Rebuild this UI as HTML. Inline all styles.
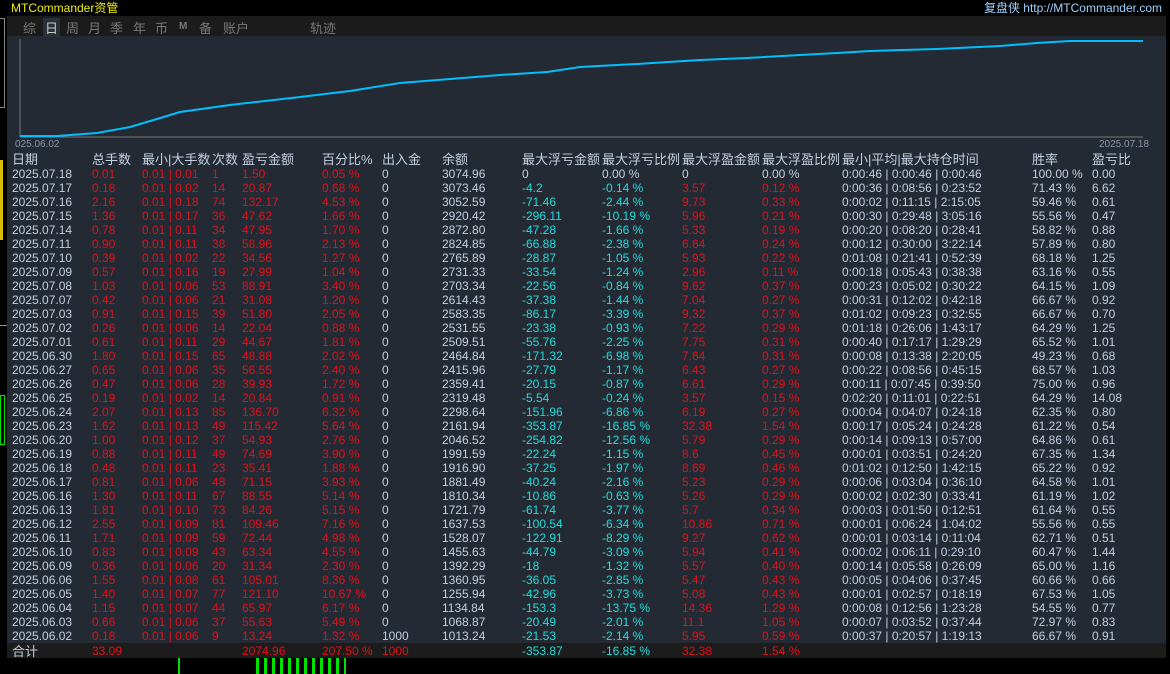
<!DOCTYPE html>
<html><head><meta charset="utf-8">
<style>
*{margin:0;padding:0;box-sizing:border-box}
body{width:1170px;height:674px;background:#000;overflow:hidden;position:relative;font-family:"Liberation Sans","Noto Sans CJK SC",sans-serif;font-size:12px;color:#c3cfe2}
.top{position:absolute;left:0;top:0;width:1170px;height:14px;}
.title{position:absolute;left:11px;top:-1px;color:#f0f000;font-size:12px}
.url{position:absolute;right:8px;top:-1px;color:#9fd0ff;font-size:12px}
.panel{position:absolute;left:7px;top:16px;width:1159px;height:642px;background:#232a33}
.tabs{position:absolute;left:0;top:0;width:1159px;height:20px;background:#1b1b1b;}
.tab{position:absolute;top:2px;font-size:13px;color:#777}
.chart{position:absolute;left:0;top:20px;}
.t{position:absolute;white-space:nowrap;line-height:13px}
.r{color:#e3101a}.c{color:#22dcdc}
.tot{position:absolute;left:0;top:627px;width:1159px;height:15px;background:#1c1c1c}
</style></head><body>
<div class="top"><div class="title">MTCommander资管</div><div class="url">复盘侠 http://MTCommander.com</div></div>
<div style="position:absolute;left:0;top:18px;width:5px;height:90px;border:1px solid #888;border-left:none"></div>
<div style="position:absolute;left:0;top:160px;width:3px;height:80px;background:#d8c000"></div>
<div style="position:absolute;left:0;top:325px;width:7px;height:1px;background:#8090a0"></div>
<div style="position:absolute;left:0;top:395px;width:5px;height:50px;border:1px solid #00e000"></div>
<div class="panel" id="p">
<div class="tabs">
<span class="tab" style="left:16px">综</span>
<span class="tab" style="left:36px;color:#ccc;background:#28303a;padding:0 2px">日</span>
<span class="tab" style="left:59px">周</span>
<span class="tab" style="left:81px">月</span>
<span class="tab" style="left:103px">季</span>
<span class="tab" style="left:126px">年</span>
<span class="tab" style="left:148px">币</span>
<span class="tab" style="left:172px;font-size:10px;top:5px;font-weight:bold">M</span>
<span class="tab" style="left:192px">备</span>
<span class="tab" style="left:216px">账户</span>
<span class="tab" style="left:303px">轨迹</span>
</div>
<svg class="chart" width="1159" height="112" viewBox="0 0 1159 112">
<line x1="13" y1="3" x2="13" y2="101" stroke="#777" stroke-width="1"/>
<line x1="13" y1="101" x2="1136" y2="101" stroke="#777" stroke-width="1"/>
<polyline fill="none" stroke="#00bfff" stroke-width="2" points="13,100 50,100 90,97 123,91 150,83 173,76 223,69 293,61 343,55 393,47 443,43 493,39 540,36 573,31 630,28 693,24 740,22 793,19 830,17 863,15 930,13 993,10 1030,7 1063,5 1136,5"/>
<text x="8" y="111" fill="#8a96a8" font-size="10" font-family="Liberation Sans">025.06.02</text>
<text x="1092" y="111" fill="#8a96a8" font-size="10" font-family="Liberation Sans">2025.07.18</text>
</svg>
<div class="tot"></div>
</div>
<script>
var D=[
["2025.07.18","0.01","0.01 | 0.01","1","1.50","0.05 %","0","3074.96","0","0.00 %","0","0.00 %","0:00:46 | 0:00:46 | 0:00:46","100.00 %","0.00"],
["2025.07.17","0.18","0.01 | 0.02","14","20.87","0.68 %","0","3073.46","-4.2","-0.14 %","3.57","0.12 %","0:00:36 | 0:08:56 | 0:23:52","71.43 %","6.62"],
["2025.07.16","2.16","0.01 | 0.18","74","132.17","4.53 %","0","3052.59","-71.46","-2.44 %","9.73","0.33 %","0:00:02 | 0:11:15 | 2:15:05","59.46 %","0.61"],
["2025.07.15","1.36","0.01 | 0.17","36","47.62","1.66 %","0","2920.42","-296.11","-10.19 %","5.96","0.21 %","0:00:30 | 0:29:48 | 3:05:16","55.56 %","0.47"],
["2025.07.14","0.78","0.01 | 0.11","34","47.95","1.70 %","0","2872.80","-47.28","-1.66 %","5.33","0.19 %","0:00:20 | 0:08:20 | 0:28:41","58.82 %","0.88"],
["2025.07.11","0.90","0.01 | 0.11","38","58.96","2.13 %","0","2824.85","-66.88","-2.38 %","6.64","0.24 %","0:00:12 | 0:30:00 | 3:22:14","57.89 %","0.80"],
["2025.07.10","0.39","0.01 | 0.02","22","34.56","1.27 %","0","2765.89","-28.87","-1.05 %","5.93","0.22 %","0:01:08 | 0:21:41 | 0:52:39","68.18 %","1.25"],
["2025.07.09","0.57","0.01 | 0.16","19","27.99","1.04 %","0","2731.33","-33.54","-1.24 %","2.96","0.11 %","0:00:18 | 0:05:43 | 0:38:38","63.16 %","0.55"],
["2025.07.08","1.03","0.01 | 0.06","53","88.91","3.40 %","0","2703.34","-22.56","-0.84 %","9.62","0.37 %","0:00:23 | 0:05:02 | 0:30:22","64.15 %","1.09"],
["2025.07.07","0.42","0.01 | 0.06","21","31.08","1.20 %","0","2614.43","-37.38","-1.44 %","7.04","0.27 %","0:00:31 | 0:12:02 | 0:42:18","66.67 %","0.92"],
["2025.07.03","0.91","0.01 | 0.15","39","51.80","2.05 %","0","2583.35","-86.17","-3.39 %","9.32","0.37 %","0:01:02 | 0:09:23 | 0:32:55","66.67 %","0.70"],
["2025.07.02","0.26","0.01 | 0.06","14","22.04","0.88 %","0","2531.55","-23.38","-0.93 %","7.22","0.29 %","0:01:18 | 0:26:06 | 1:43:17","64.29 %","1.25"],
["2025.07.01","0.61","0.01 | 0.11","29","44.67","1.81 %","0","2509.51","-55.76","-2.25 %","7.75","0.31 %","0:00:40 | 0:17:17 | 1:29:29","65.52 %","1.01"],
["2025.06.30","1.80","0.01 | 0.15","65","48.88","2.02 %","0","2464.84","-171.32","-6.98 %","7.64","0.31 %","0:00:08 | 0:13:38 | 2:20:05","49.23 %","0.68"],
["2025.06.27","0.65","0.01 | 0.06","35","56.55","2.40 %","0","2415.96","-27.79","-1.17 %","6.43","0.27 %","0:00:22 | 0:08:56 | 0:45:15","68.57 %","1.03"],
["2025.06.26","0.47","0.01 | 0.06","28","39.93","1.72 %","0","2359.41","-20.15","-0.87 %","6.61","0.29 %","0:00:11 | 0:07:45 | 0:39:50","75.00 %","0.96"],
["2025.06.25","0.19","0.01 | 0.02","14","20.84","0.91 %","0","2319.48","-5.54","-0.24 %","3.57","0.15 %","0:02:20 | 0:11:01 | 0:22:51","64.29 %","14.08"],
["2025.06.24","2.07","0.01 | 0.13","85","136.70","6.32 %","0","2298.64","-151.96","-6.86 %","6.19","0.27 %","0:00:04 | 0:04:07 | 0:24:18","62.35 %","0.80"],
["2025.06.23","1.62","0.01 | 0.13","49","115.42","5.64 %","0","2161.94","-353.87","-16.85 %","32.38","1.54 %","0:00:17 | 0:05:24 | 0:24:28","61.22 %","0.54"],
["2025.06.20","1.00","0.01 | 0.12","37","54.93","2.76 %","0","2046.52","-254.82","-12.56 %","5.79","0.29 %","0:00:14 | 0:09:13 | 0:57:00","64.86 %","0.61"],
["2025.06.19","0.88","0.01 | 0.11","49","74.69","3.90 %","0","1991.59","-22.24","-1.15 %","8.6","0.45 %","0:00:01 | 0:03:51 | 0:24:20","67.35 %","1.34"],
["2025.06.18","0.48","0.01 | 0.11","23","35.41","1.88 %","0","1916.90","-37.25","-1.97 %","8.69","0.46 %","0:01:02 | 0:12:50 | 1:42:15","65.22 %","0.92"],
["2025.06.17","0.81","0.01 | 0.06","48","71.15","3.93 %","0","1881.49","-40.24","-2.16 %","5.23","0.29 %","0:00:06 | 0:03:04 | 0:36:10","64.58 %","1.01"],
["2025.06.16","1.30","0.01 | 0.11","67","88.55","5.14 %","0","1810.34","-10.86","-0.63 %","5.26","0.29 %","0:00:02 | 0:02:30 | 0:33:41","61.19 %","1.02"],
["2025.06.13","1.81","0.01 | 0.10","73","84.26","5.15 %","0","1721.79","-61.74","-3.77 %","5.7","0.34 %","0:00:03 | 0:01:50 | 0:12:51","61.64 %","0.55"],
["2025.06.12","2.55","0.01 | 0.09","81","109.46","7.16 %","0","1637.53","-100.54","-6.34 %","10.86","0.71 %","0:00:01 | 0:06:24 | 1:04:02","55.56 %","0.55"],
["2025.06.11","1.71","0.01 | 0.09","59","72.44","4.98 %","0","1528.07","-122.91","-8.29 %","9.27","0.62 %","0:00:01 | 0:03:14 | 0:11:04","62.71 %","0.51"],
["2025.06.10","0.83","0.01 | 0.09","43","63.34","4.55 %","0","1455.63","-44.79","-3.09 %","5.94","0.41 %","0:00:02 | 0:06:11 | 0:29:10","60.47 %","1.44"],
["2025.06.09","0.36","0.01 | 0.06","20","31.34","2.30 %","0","1392.29","-18","-1.32 %","5.57","0.40 %","0:00:14 | 0:05:58 | 0:26:09","65.00 %","1.16"],
["2025.06.06","1.55","0.01 | 0.08","61","105.01","8.36 %","0","1360.95","-36.05","-2.85 %","5.47","0.43 %","0:00:05 | 0:04:06 | 0:37:45","60.66 %","0.66"],
["2025.06.05","1.40","0.01 | 0.07","77","121.10","10.67 %","0","1255.94","-42.96","-3.73 %","5.08","0.43 %","0:00:01 | 0:02:57 | 0:18:19","67.53 %","1.05"],
["2025.06.04","1.15","0.01 | 0.07","44","65.97","6.17 %","0","1134.84","-153.3","-13.75 %","14.36","1.29 %","0:00:08 | 0:12:56 | 1:23:28","54.55 %","0.77"],
["2025.06.03","0.66","0.01 | 0.06","37","55.63","5.49 %","0","1068.87","-20.49","-2.01 %","11.1","1.05 %","0:00:07 | 0:03:52 | 0:37:44","72.97 %","0.83"],
["2025.06.02","0.18","0.01 | 0.06","9","13.24","1.32 %","1000","1013.24","-21.53","-2.14 %","5.95","0.59 %","0:00:37 | 0:20:57 | 1:19:13","66.67 %","0.91"]];
var X=[5,85,135,205,235,315,375,435,515,595,675,755,835,1025,1085];
var H=["日期","总手数","最小|大手数","次数","盈亏金额","百分比%","出入金","余额","最大浮亏金额","最大浮亏比例","最大浮盈金额","最大浮盈比例","最小|平均|最大持仓时间","胜率","盈亏比"];
var cls=["","r","r","r","r","r","","", "c","c","r","r","","",""];
var p=document.getElementById('p'),h='';
H.forEach(function(s,i){h+='<div class="t" style="left:'+X[i]+'px;top:136px;font-size:13px;line-height:15px">'+s+'</div>'});
D.forEach(function(r,j){var y=151.5+j*14;r.forEach(function(s,i){var c=cls[i];if(j==0&&(i>=8&&i<=11))c='';h+='<div class="t '+c+'" style="left:'+X[i]+'px;top:'+y.toFixed(1)+'px">'+s+'</div>'})});
var T=[[0,"合计",""],[85,"33.09","r"],[235,"2074.96","r"],[315,"207.50 %","r"],[375,"1000","r"],[515,"-353.87","c"],[595,"-16.85 %","c"],[675,"32.38","r"],[755,"1.54 %","r"]];
T.forEach(function(t){h+='<div class="t '+t[2]+'" style="left:'+(t[0]+(t[0]==0?5:0))+'px;top:629px'+(t[0]==0?';font-size:13px':'')+'">'+t[1]+'</div>'});
p.insertAdjacentHTML('beforeend',h);
</script>
<div style="position:absolute;left:178px;top:658px;width:2px;height:16px;background:#00e000"></div>
<div style="position:absolute;left:256px;top:658px;width:90px;height:16px;background:repeating-linear-gradient(90deg,#00e000 0 3px,transparent 3px 8px)"></div>
</body></html>
